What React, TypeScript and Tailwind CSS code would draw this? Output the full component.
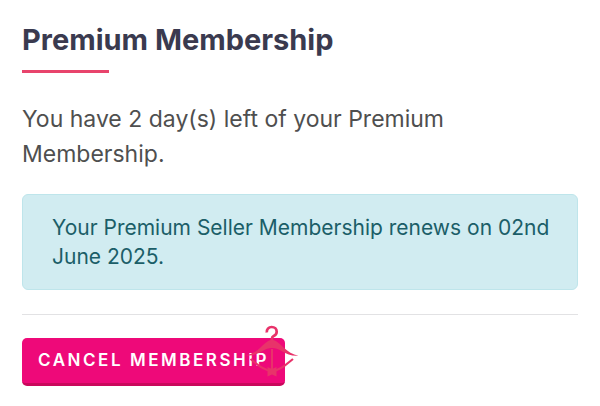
function HangerBowLogo() {
  return (
    <svg viewBox="0 0 56 54" className="h-[54px] w-14" fill="none" stroke="#e8336a" aria-hidden="true">
      <path d="M23.800 8.500c-.4-3 1.800-5.500 4.900-5.500 2.900 0 5 2 5 4.700 0 2.300-1.400 3.600-3 4.300-1.300.6-1.700 1.300-1.700 2.600v2.500" strokeWidth="2.7" />
      <path
        d="M29 15.500c-5 1.200-8 4.500-11.500 8C13.500 27.500 9 30 3 31.200c6 .8 11.500-1 16.500-4.200 6-4 13-4 19 0 5.500 3.500 10.500 5.200 17 4.700-6-1.200-10.500-4.200-15-8.200-3.500-3.500-6.500-6.800-11.500-8z"
        fill="#e8336a"
        stroke="none"
      />
      <path d="M7.500 35l5 4c4.500 4 10 7 16.500 8.500M50 35l-5 4c-4.500 4-9.500 7-16 8.500" strokeWidth="2.2" />
      <path d="M29 25v24" strokeWidth="2" />
      <path d="M29 45l4.500-2v9.500L29 50.500l-4.500 2V43z" fill="#e8336a" stroke="none" />
    </svg>
  );
}

export default function App() {
  return (
    <main className="bg-white px-[22px] pt-5 pb-5 font-['Inter',sans-serif]">
      <h1 className="text-[29px] leading-10 font-bold text-[#3a3a4f]">Premium Membership</h1>
      <div className="mt-[10px] h-[3px] w-[87px] bg-[#e8446c]" />
      <p className="mt-[29px] text-[23px] leading-[35px] text-[#4f4f4f]">
        You have 2 day(s) left of your Premium Membership.
      </p>
      <div
        role="status"
        className="mt-[22px] rounded-md border border-[#bee5eb] bg-[#d1ecf1] py-[18px] pr-5 pl-[29px] text-[21px] leading-[29px] text-[#1b5e68]"
      >
        Your Premium Seller Membership renews on 02nd June 2025.
      </div>
      <hr className="mt-6 mb-[23px] border-t border-[#e2e2e4]" />
      <div className="relative w-fit">
        <button
          type="button"
          className="h-12 rounded-[5px] border-b-[3px] border-[#c9085c] bg-[#ee0979] px-4 text-[17px] font-semibold tracking-[0.15em] text-white uppercase"
        >
          Cancel Membership
        </button>
        <div className="pointer-events-none absolute -top-[14px] -right-[14px]">
          <HangerBowLogo />
        </div>
      </div>
    </main>
  );
}
